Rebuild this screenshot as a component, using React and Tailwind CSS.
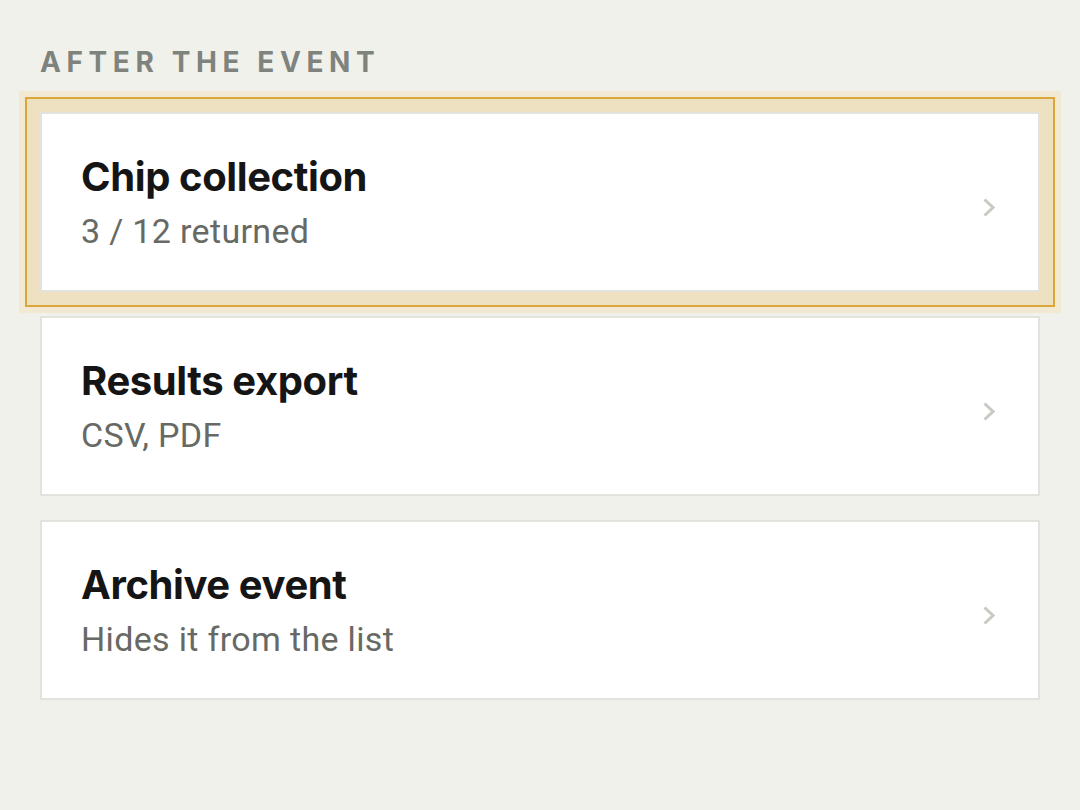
const items = [
  { title: 'Chip collection', detail: '3 / 12 returned', focused: true },
  { title: 'Results export', detail: 'CSV, PDF' },
  { title: 'Archive event', detail: 'Hides it from the list' },
];

const Chevron = () => (
  <svg width="12" height="19" viewBox="0 0 12 19" fill="none" className="shrink-0 mt-[11px]">
    <polyline points="1.5,1.5 10,9.5 1.5,17.5" stroke="#c9c9c3" strokeWidth="3" />
  </svg>
);

const Row = ({ item }) => (
  <button
    className={`w-full text-left bg-white border-2 border-[#e3e3dd] h-[180px] flex items-center pl-[39px] pr-[43px] ${
      item.focused ? 'shadow-[0_0_0_13px_#eee1c1,0_0_0_15px_#dba63a,0_0_0_21px_#f2e9d3] relative z-10' : ''
    }`}
  >
    <div className="flex-1 flex flex-col pb-[1px]">
      <span className="font-['Inter',sans-serif] font-bold text-[40px] leading-[48px] tracking-[-0.01em] text-[#151515]">
        {item.title}
      </span>
      <span className="font-['Roboto',sans-serif] text-[34px] leading-[40px] tracking-[0.01em] text-[#676965] mt-[10px]">
        {item.detail}
      </span>
    </div>
    <Chevron />
  </button>
);

export default function App() {
  return (
    <div className="min-h-[810px] w-[1080px] bg-[#f1f1ec] px-10 pt-[44px]">
      <h2 className="font-['Inter',sans-serif] font-bold text-[28px] leading-[36px] tracking-[0.2em] text-[#7f837d] uppercase">
        After the event
      </h2>
      <div className="mt-[32px] flex flex-col gap-6">
        {items.map((item) => (
          <Row key={item.title} item={item} />
        ))}
      </div>
    </div>
  );
}
